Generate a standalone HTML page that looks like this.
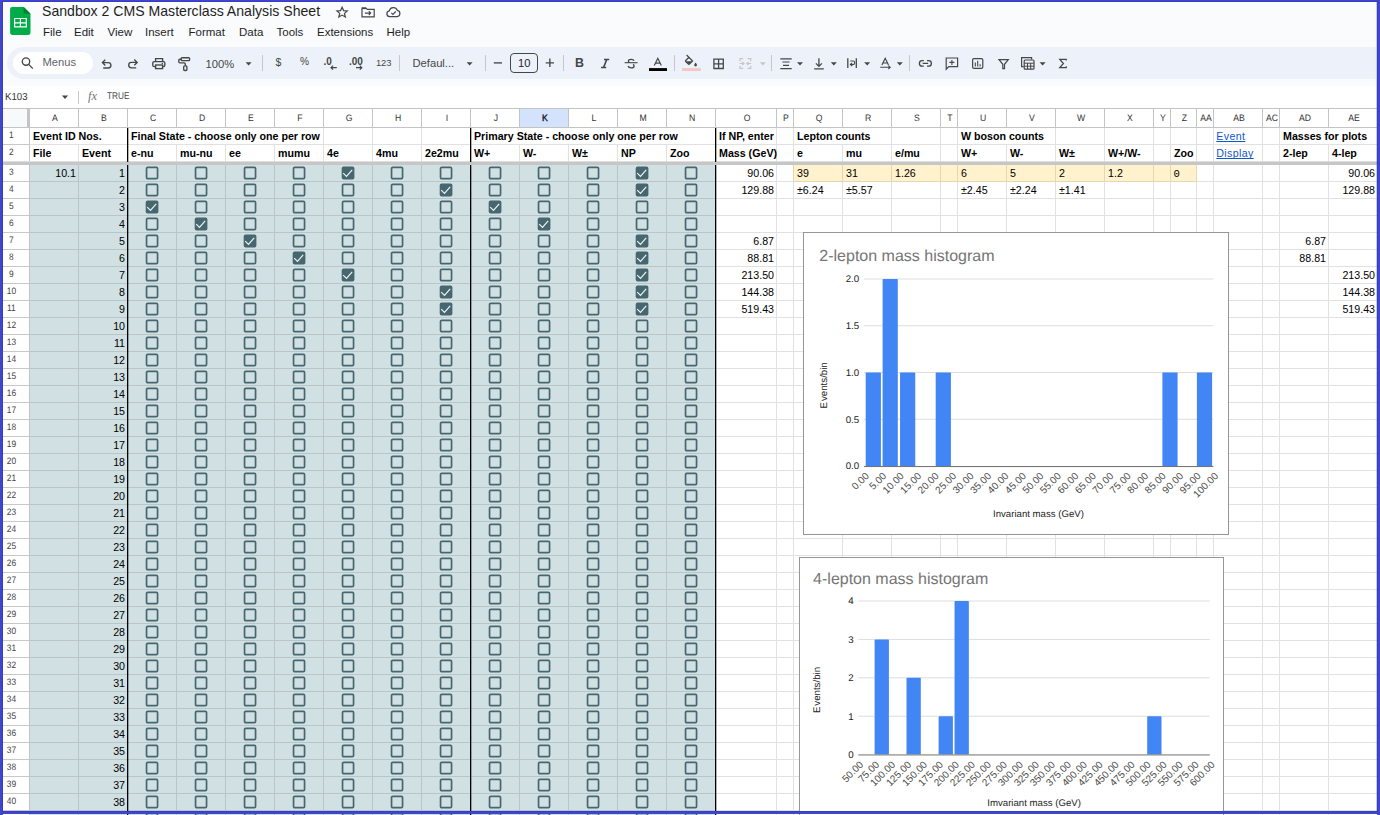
<!DOCTYPE html><html><head><meta charset="utf-8"><title>Sandbox 2 CMS Masterclass Analysis Sheet</title>
<style>

html,body{margin:0;padding:0;width:1380px;height:815px;overflow:hidden}
body{width:1380px;height:815px;overflow:hidden;position:relative;background:#fff;font-family:"Liberation Sans", sans-serif;color:#000}
div,span,svg{position:absolute;box-sizing:border-box}
.t{white-space:pre;font-size:10.67px;line-height:16px;height:16px}
.b{font-weight:bold}
.r{text-align:right}
.hl{height:1px;background:rgba(0,0,0,.12)}
.vl{width:1px;background:rgba(0,0,0,.12)}
.ch{font-size:9.3px;line-height:18px;height:18px;text-align:center;color:#333;top:108.8px;margin-left:.6px;transform:scaleX(.93);text-rendering:geometricPrecision}
.rh{font-size:9.3px;line-height:16px;height:16px;text-align:center;color:#444;left:0px;width:22.8px;transform:scaleX(.9);margin-top:-1.2px;text-rendering:geometricPrecision}
.cb{width:12px;height:12px;border:1.6px solid #46676f;border-radius:2px}
.cbx{width:12px;height:12px;border-radius:2px;background:#46676f}
.mn{font-size:11.5px;top:25px;line-height:14px;color:#1f1f1f;white-space:pre}
.sep{width:1px;height:16px;top:55px;background:#c7c7c7}
.tb{white-space:pre;line-height:14px;color:#444746}
a{color:#1155cc;text-decoration-skip-ink:none}

</style></head><body><div id="w" style="left:0;top:0;width:1380px;height:815px;overflow:hidden">
<div style="left:0;top:0;width:1380px;height:86px;background:#f9fbfd"></div>
<div style="left:3px;top:2px;width:1374px;height:1px;background:#fff"></div><div style="left:3px;top:2px;width:1px;height:84px;background:#fff"></div>
<svg style="left:8px;top:5px" width="26" height="32" viewBox="8 5 26 32">
<path d="M12.2 6.9H23.7L30.5 13.8V32.8A2.1 2.1 0 0 1 28.4 34.9H12.2A2.1 2.1 0 0 1 10.1 32.8V9A2.1 2.1 0 0 1 12.2 6.9z" fill="#00ac47"/>
<path d="M23.7 6.9V12.6Q23.7 13.8 24.9 13.8H30.5z" fill="#00832d"/>
<path d="M14 17.9H26.9V27.5H14zM15.2 19.1V22.2H19.8V19.1zM21 19.1V22.2H25.7V19.1zM15.2 23.4V26.3H19.8V23.4zM21 23.4V26.3H25.7V23.4z" fill="#fff" fill-rule="evenodd"/>
</svg>

<div class="mn" style="left:42px;top:2px;font-size:14.1px;line-height:18px;color:#1f1f1f">Sandbox 2 CMS Masterclass Analysis Sheet</div>
<svg style="left:330px;top:2px" width="80" height="22" viewBox="330 2 80 22" fill="none" stroke="#444746" stroke-width="1.2" stroke-linejoin="miter">
<!-- star -->
<path d="M342.1 7.2L343.6 10.6L347.3 10.95L344.5 13.4L345.35 17L342.1 15.1L338.85 17L339.7 13.4L336.9 10.95L340.6 10.6z"/>
<!-- folder move -->
<path d="M367.3 9.4L365.9 8H362V16.9H374.2V9.4z"/><path d="M362 8.3H366" stroke-width="1.6"/><path d="M364.9 13.1H370.6M368.8 11.2L370.7 13.1L368.8 15" stroke-width="1.1"/>
<!-- cloud done -->
<path d="M389.6 16.6A2.9 2.9 0 0 1 389.3 10.85A4.2 4.2 0 0 1 397.3 10.3A3.2 3.2 0 0 1 397.2 16.6z"/><path d="M391.3 12.9L392.9 14.5L395.8 11.5" stroke-width="1.1"/>
</svg>

<div class="mn" style="left:43px">File</div>
<div class="mn" style="left:74px">Edit</div>
<div class="mn" style="left:107.5px">View</div>
<div class="mn" style="left:145px">Insert</div>
<div class="mn" style="left:188.5px">Format</div>
<div class="mn" style="left:239px">Data</div>
<div class="mn" style="left:276.5px">Tools</div>
<div class="mn" style="left:317px">Extensions</div>
<div class="mn" style="left:386.5px">Help</div>
<div style="left:7px;top:47px;width:1400px;height:32px;border-radius:16px;background:#edf2fa"></div>
<div style="left:13px;top:52px;width:80px;height:22px;border-radius:11px;background:#fff"></div>
<svg style="left:0;top:44px" width="1380" height="40" viewBox="0 44 1380 40" fill="none" stroke="#444746" stroke-width="1.35" stroke-linecap="butt" stroke-linejoin="miter">
<!-- search -->
<circle cx="26" cy="61.6" r="3.7"/><path d="M28.7 64.4L32.8 68.6"/>
<!-- undo -->
<path d="M105.3 59.7L102.4 62.6L105.3 65.5M102.6 62.6H108.2A2.7 2.7 0 0 1 108.2 68H103.2"/>
<!-- redo -->
<path d="M134.3 59.5L137.2 62.4L134.3 65.3M137 62.4H131.4A2.7 2.7 0 0 0 131.4 67.8H136.2"/>
<!-- print -->
<path d="M155.6 61.6V58.6H162.6V61.6"/><rect x="152.8" y="61.6" width="12" height="5" rx="1.3"/><rect x="155.6" y="65" width="7" height="3.6" fill="#edf2fa"/><circle cx="162.3" cy="63.4" r=".7" fill="#444746" stroke="none"/>
<!-- paint roller -->
<rect x="181.2" y="57.7" width="8.4" height="2.9" rx=".9"/><path d="M181.2 59.2H179.9Q178.8 59.2 178.8 60.3V61.7Q178.8 62.8 179.9 62.8H184.2Q185.3 62.8 185.3 63.9V65.8"/><rect x="183.7" y="65.8" width="3.2" height="4.7" rx="1"/>
<!-- dropdown arrows -->
<g fill="#444746" stroke="none">
<path d="M245.6 62.2h6l-3 3.3z"/><path d="M466.6 62.2h6l-3 3.3z"/>
<path d="M797 62.2h6l-3 3.3z"/><path d="M830.8 62.2h6l-3 3.3z"/><path d="M864.2 62.2h6l-3 3.3z"/><path d="M896.8 62.2h6l-3 3.3z"/><path d="M1039.6 62.2h6l-3 3.3z"/>
<path d="M759.8 62.2h6l-3 3.3z" fill="#c4c7c5"/>
</g>
<!-- decimal arrows -->
<path d="M336.8 67.7H331M333 65.7L331 67.7L333 69.7" stroke-width="1.2"/>
<path d="M356 67.7H361.8M359.8 65.7L361.8 67.7L359.8 69.7" stroke-width="1.2"/>
<!-- minus, font size box, plus -->
<path d="M493.8 62.9H502"/><rect x="510.5" y="53.5" width="27" height="19" rx="3.5" stroke-width="1"/><path d="M545.7 62.8H554M549.85 58.6V67"/>
<!-- italic -->
<path d="M604 59.6H609.2M601 67.4H606.2M606.7 59.6L603.6 67.4" stroke-width="1.5"/>
<!-- strikethrough -->
<path d="M624.6 62.7H637.6" stroke-width="1.1"/>
<path d="M634 60.9Q633.6 59.3 631.1 59.3Q628.4 59.3 628.4 61.1Q628.4 62 629.3 62.4M628.1 66Q628.6 67.9 631.2 67.9Q634.1 67.9 634.1 65.9Q634.1 64.8 633 64.3" stroke-width="1.3"/>
<!-- text colour -->
<rect x="649" y="68.1" width="18" height="2.9" fill="#000" stroke="none"/>
<path d="M654.3 65.4L657.8 58.3L661.3 65.4M655.5 63.2H660.1" stroke-width="1.2"/>
<!-- fill colour -->
<rect x="682" y="68.1" width="18.8" height="2.9" fill="#f4c7c3" stroke="none"/>
<path d="M686.6 55L692.6 61L689.4 64.2Q688.9 64.7 688.4 64.2L685.7 61.5Q685.2 61 685.7 60.5L689.3 57" stroke-width="1.2"/><path d="M686 61.3H692.2L689 64.4z" fill="#444746" stroke="none"/><path d="M695.6 62.6Q697 64.4 697 65.1A1.4 1.4 0 0 1 694.2 65.1Q694.2 64.4 695.6 62.6z" fill="#444746" stroke="none"/>
<!-- borders -->
<path d="M713.9 59.1H723.3V68.5H713.9zM718.6 59.1V68.5M713.9 63.8H723.3" stroke-width="1.3"/>
<!-- merge (disabled) -->
<g stroke="#c4c7c5" stroke-width="1.2"><path d="M740 61.2V58.7H743.2M747.6 58.7H750.8V61.2M740 65.8V68.3H743.2M747.6 68.3H750.8V65.8M739.6 63.5H744M742.3 61.8L744 63.5L742.3 65.2M751.2 63.5H746.8M748.5 61.8L746.8 63.5L748.5 65.2"/></g>
<!-- align center -->
<path d="M780.3 58.8H791.7M782.4 62H789.6M783 65.3H789M780.3 68.6H791.7" stroke-width="1.2"/>
<!-- valign bottom -->
<path d="M818.9 58.3V66.2M815.9 63.4L818.9 66.4L821.9 63.4M814.2 68.9H823.8" stroke-width="1.3"/>
<!-- wrap -->
<path d="M847.8 58.3V68.1M856.3 58.3V68.1" stroke-width="1.3"/><path d="M850.3 61H852.9A1.7 1.7 0 0 1 852.9 64.6H850.6M852 63L850.4 64.6L852 66.2" stroke-width="1.1"/>
<!-- rotate -->
<path d="M881.9 65L885.2 58.3L888.5 65M883 63H887.4" stroke-width="1.2"/><path d="M880.2 67.3H890.2M888.4 65.6L890.2 67.3L888.4 69" stroke-width="1.1"/>
<!-- link -->
<path d="M923.8 60.6H922.2A2.8 2.8 0 0 0 922.2 66.2H923.8M927 60.6H928.6A2.8 2.8 0 0 1 928.6 66.2H927M922.6 63.4H928.2" stroke-width="1.3"/>
<!-- comment -->
<path d="M946.2 69.2V58H957.6V66.6H948.8z" stroke-width="1.2"/><path d="M949.4 62.4H954.4M951.9 59.9V64.9" stroke-width="1.1"/>
<!-- chart -->
<rect x="972.6" y="58.6" width="10.2" height="9.8" rx="1.4" stroke-width="1.2"/><path d="M975.3 62.6V66.4M977.7 60.8V66.4M980.1 64.3V66.4" stroke-width="1.1"/>
<!-- filter -->
<path d="M999 59.7H1008.3L1004.5 64.3V68.6H1002.8V64.3z" stroke-width="1.2"/>
<!-- table views -->
<path d="M1023.6 66.6H1021.6V57.6H1031.6V59.4" stroke-width="1.2"/><rect x="1024.2" y="60" width="9.8" height="9.2" rx="1" stroke-width="1.2"/><path d="M1024.2 63.2H1034M1027.5 63.2V69.2M1030.7 63.2V69.2M1024.2 66.2H1034" stroke-width="1"/>
<!-- sigma -->
<path d="M1066.2 60.6V59.3H1059.8L1063.4 63.5L1059.8 67.6H1066.2V66.3" stroke-width="1.3"/>
</svg>
<div class="sep" style="left:262px"></div><div class="sep" style="left:399px"></div><div class="sep" style="left:485px"></div><div class="sep" style="left:563px"></div><div class="sep" style="left:674px"></div><div class="sep" style="left:771px"></div><div class="sep" style="left:909px"></div>
<div class="tb" style="left:42.5px;top:55.3px;font-size:11.2px;color:#5f6368">Menus</div>
<div class="tb" style="left:205.5px;top:56.8px;font-size:11.2px">100%</div>
<div class="tb" style="left:275.5px;top:55.3px;font-size:10.5px">$</div>
<div class="tb" style="left:300px;top:55.3px;font-size:10.2px">%</div>
<div class="tb" style="left:323.5px;top:54.6px;font-size:10px;font-weight:bold">.0</div>
<div class="tb" style="left:349px;top:54.6px;font-size:10px;font-weight:bold">.00</div>
<div class="tb" style="left:376px;top:55.8px;font-size:9.4px;letter-spacing:-.1px">123</div>
<div class="tb" style="left:412.5px;top:56.4px;font-size:11.2px">Defaul...</div>
<div class="tb" style="left:518px;top:56.4px;font-size:11.2px;color:#1f1f1f">10</div>
<div class="tb" style="left:575px;top:56px;font-size:12.4px;font-weight:bold">B</div>

<div style="left:0;top:86px;width:1380px;height:22px;background:#fff"></div>
<div style="left:4.6px;top:91.6px;font-size:10.2px;line-height:12px;color:#333;white-space:pre;text-rendering:geometricPrecision;transform-origin:0 0;transform:scaleX(.95)">K103</div>
<svg style="left:61px;top:94.6px" width="8" height="5" viewBox="0 0 8 5"><path d="M0.9 0.6h6.2L4 4.1z" fill="#444"/></svg>
<div style="left:78px;top:91px;width:1px;height:13px;background:#c7c7c7"></div>
<div style="left:88px;top:88px;font-family:'Liberation Serif',serif;font-style:italic;font-size:12.5px;line-height:16px;color:#777;white-space:pre;letter-spacing:0px">fx</div>
<div style="left:107px;top:90.6px;font-size:9.7px;line-height:12px;color:#4a4a4a;white-space:pre;text-rendering:geometricPrecision;transform-origin:0 0;transform:scaleX(.85)">TRUE</div>
<div style="left:3px;top:109px;width:24px;height:18px;background:#f8f9fa"></div>
<div style="left:520px;top:109px;width:48px;height:18px;background:#d3e3fd"></div>
<div style="left:30px;top:165px;width:685px;height:660px;background:#d0e0e3"></div>
<div style="left:794px;top:165px;width:402px;height:16px;background:#fff2cc"></div>
<div style="left:0;top:108px;width:1380px;height:1px;background:#c4c4c4"></div>
<div style="left:0;top:127px;width:1380px;height:1px;background:#c4c4c4"></div>
<div style="left:27px;top:109px;width:3px;height:18px;background:#c4c4c4"></div>
<div style="left:78px;top:109px;width:1px;height:18px;background:#c4c4c4"></div>
<div class="ch" style="left:30px;width:48px">A</div>
<div style="left:127px;top:109px;width:1px;height:18px;background:#c4c4c4"></div>
<div class="ch" style="left:79px;width:48px">B</div>
<div style="left:176px;top:109px;width:1px;height:18px;background:#c4c4c4"></div>
<div class="ch" style="left:128px;width:48px">C</div>
<div style="left:225px;top:109px;width:1px;height:18px;background:#c4c4c4"></div>
<div class="ch" style="left:177px;width:48px">D</div>
<div style="left:274px;top:109px;width:1px;height:18px;background:#c4c4c4"></div>
<div class="ch" style="left:226px;width:48px">E</div>
<div style="left:323px;top:109px;width:1px;height:18px;background:#c4c4c4"></div>
<div class="ch" style="left:275px;width:48px">F</div>
<div style="left:372px;top:109px;width:1px;height:18px;background:#c4c4c4"></div>
<div class="ch" style="left:324px;width:48px">G</div>
<div style="left:421px;top:109px;width:1px;height:18px;background:#c4c4c4"></div>
<div class="ch" style="left:373px;width:48px">H</div>
<div style="left:470px;top:109px;width:1px;height:18px;background:#c4c4c4"></div>
<div class="ch" style="left:422px;width:48px">I</div>
<div style="left:519px;top:109px;width:1px;height:18px;background:#c4c4c4"></div>
<div class="ch" style="left:471px;width:48px">J</div>
<div style="left:568px;top:109px;width:1px;height:18px;background:#c4c4c4"></div>
<div class="ch" style="left:520px;width:48px;color:#111;-webkit-text-stroke:.35px #111">K</div>
<div style="left:617px;top:109px;width:1px;height:18px;background:#c4c4c4"></div>
<div class="ch" style="left:569px;width:48px">L</div>
<div style="left:666px;top:109px;width:1px;height:18px;background:#c4c4c4"></div>
<div class="ch" style="left:618px;width:48px">M</div>
<div style="left:715px;top:109px;width:1px;height:18px;background:#c4c4c4"></div>
<div class="ch" style="left:667px;width:48px">N</div>
<div style="left:776px;top:109px;width:1px;height:18px;background:#c4c4c4"></div>
<div class="ch" style="left:716px;width:60px">O</div>
<div style="left:793px;top:109px;width:1px;height:18px;background:#c4c4c4"></div>
<div class="ch" style="left:777px;width:16px">P</div>
<div style="left:842px;top:109px;width:1px;height:18px;background:#c4c4c4"></div>
<div class="ch" style="left:794px;width:48px">Q</div>
<div style="left:891px;top:109px;width:1px;height:18px;background:#c4c4c4"></div>
<div class="ch" style="left:843px;width:48px">R</div>
<div style="left:940px;top:109px;width:1px;height:18px;background:#c4c4c4"></div>
<div class="ch" style="left:892px;width:48px">S</div>
<div style="left:957px;top:109px;width:1px;height:18px;background:#c4c4c4"></div>
<div class="ch" style="left:941px;width:16px">T</div>
<div style="left:1006px;top:109px;width:1px;height:18px;background:#c4c4c4"></div>
<div class="ch" style="left:958px;width:48px">U</div>
<div style="left:1055px;top:109px;width:1px;height:18px;background:#c4c4c4"></div>
<div class="ch" style="left:1007px;width:48px">V</div>
<div style="left:1104px;top:109px;width:1px;height:18px;background:#c4c4c4"></div>
<div class="ch" style="left:1056px;width:48px">W</div>
<div style="left:1153px;top:109px;width:1px;height:18px;background:#c4c4c4"></div>
<div class="ch" style="left:1105px;width:48px">X</div>
<div style="left:1170px;top:109px;width:1px;height:18px;background:#c4c4c4"></div>
<div class="ch" style="left:1154px;width:16px">Y</div>
<div style="left:1196px;top:109px;width:1px;height:18px;background:#c4c4c4"></div>
<div class="ch" style="left:1171px;width:25px">Z</div>
<div style="left:1213px;top:109px;width:1px;height:18px;background:#c4c4c4"></div>
<div class="ch" style="left:1197px;width:16px">AA</div>
<div style="left:1262px;top:109px;width:1px;height:18px;background:#c4c4c4"></div>
<div class="ch" style="left:1214px;width:48px">AB</div>
<div style="left:1279px;top:109px;width:1px;height:18px;background:#c4c4c4"></div>
<div class="ch" style="left:1263px;width:16px">AC</div>
<div style="left:1328px;top:109px;width:1px;height:18px;background:#c4c4c4"></div>
<div class="ch" style="left:1280px;width:48px">AD</div>
<div style="left:1377px;top:109px;width:1px;height:18px;background:#c4c4c4"></div>
<div class="ch" style="left:1329px;width:48px">AE</div>
<div style="left:29px;top:128px;width:1px;height:34px;background:#c4c4c4"></div>
<div style="left:29px;top:165px;width:1px;height:660px;background:#c4c4c4"></div>
<div class="rh" style="top:128px">1</div>
<div style="left:0;top:144px;width:1380px;height:1px;background:#e1e1e1"></div>
<div style="left:0;top:144px;width:30px;height:1px;background:#c8c8c8"></div>
<div class="rh" style="top:145px">2</div>
<div class="rh" style="top:165px">3</div>
<div style="left:0;top:181px;width:30px;height:1px;background:#c8c8c8"></div>
<div style="left:30px;top:181px;width:686px;height:1px;background:#b8c6c8"></div>
<div style="left:716px;top:181px;width:664px;height:1px;background:#e1e1e1"></div>
<div class="rh" style="top:182px">4</div>
<div style="left:0;top:198px;width:30px;height:1px;background:#c8c8c8"></div>
<div style="left:30px;top:198px;width:686px;height:1px;background:#b8c6c8"></div>
<div style="left:716px;top:198px;width:664px;height:1px;background:#e1e1e1"></div>
<div class="rh" style="top:199px">5</div>
<div style="left:0;top:215px;width:30px;height:1px;background:#c8c8c8"></div>
<div style="left:30px;top:215px;width:686px;height:1px;background:#b8c6c8"></div>
<div style="left:716px;top:215px;width:664px;height:1px;background:#e1e1e1"></div>
<div class="rh" style="top:216px">6</div>
<div style="left:0;top:232px;width:30px;height:1px;background:#c8c8c8"></div>
<div style="left:30px;top:232px;width:686px;height:1px;background:#b8c6c8"></div>
<div style="left:716px;top:232px;width:664px;height:1px;background:#e1e1e1"></div>
<div class="rh" style="top:233px">7</div>
<div style="left:0;top:249px;width:30px;height:1px;background:#c8c8c8"></div>
<div style="left:30px;top:249px;width:686px;height:1px;background:#b8c6c8"></div>
<div style="left:716px;top:249px;width:664px;height:1px;background:#e1e1e1"></div>
<div class="rh" style="top:250px">8</div>
<div style="left:0;top:266px;width:30px;height:1px;background:#c8c8c8"></div>
<div style="left:30px;top:266px;width:686px;height:1px;background:#b8c6c8"></div>
<div style="left:716px;top:266px;width:664px;height:1px;background:#e1e1e1"></div>
<div class="rh" style="top:267px">9</div>
<div style="left:0;top:283px;width:30px;height:1px;background:#c8c8c8"></div>
<div style="left:30px;top:283px;width:686px;height:1px;background:#b8c6c8"></div>
<div style="left:716px;top:283px;width:664px;height:1px;background:#e1e1e1"></div>
<div class="rh" style="top:284px">10</div>
<div style="left:0;top:300px;width:30px;height:1px;background:#c8c8c8"></div>
<div style="left:30px;top:300px;width:686px;height:1px;background:#b8c6c8"></div>
<div style="left:716px;top:300px;width:664px;height:1px;background:#e1e1e1"></div>
<div class="rh" style="top:301px">11</div>
<div style="left:0;top:317px;width:30px;height:1px;background:#c8c8c8"></div>
<div style="left:30px;top:317px;width:686px;height:1px;background:#b8c6c8"></div>
<div style="left:716px;top:317px;width:664px;height:1px;background:#e1e1e1"></div>
<div class="rh" style="top:318px">12</div>
<div style="left:0;top:334px;width:30px;height:1px;background:#c8c8c8"></div>
<div style="left:30px;top:334px;width:686px;height:1px;background:#b8c6c8"></div>
<div style="left:716px;top:334px;width:664px;height:1px;background:#e1e1e1"></div>
<div class="rh" style="top:335px">13</div>
<div style="left:0;top:351px;width:30px;height:1px;background:#c8c8c8"></div>
<div style="left:30px;top:351px;width:686px;height:1px;background:#b8c6c8"></div>
<div style="left:716px;top:351px;width:664px;height:1px;background:#e1e1e1"></div>
<div class="rh" style="top:352px">14</div>
<div style="left:0;top:368px;width:30px;height:1px;background:#c8c8c8"></div>
<div style="left:30px;top:368px;width:686px;height:1px;background:#b8c6c8"></div>
<div style="left:716px;top:368px;width:664px;height:1px;background:#e1e1e1"></div>
<div class="rh" style="top:369px">15</div>
<div style="left:0;top:385px;width:30px;height:1px;background:#c8c8c8"></div>
<div style="left:30px;top:385px;width:686px;height:1px;background:#b8c6c8"></div>
<div style="left:716px;top:385px;width:664px;height:1px;background:#e1e1e1"></div>
<div class="rh" style="top:386px">16</div>
<div style="left:0;top:402px;width:30px;height:1px;background:#c8c8c8"></div>
<div style="left:30px;top:402px;width:686px;height:1px;background:#b8c6c8"></div>
<div style="left:716px;top:402px;width:664px;height:1px;background:#e1e1e1"></div>
<div class="rh" style="top:403px">17</div>
<div style="left:0;top:419px;width:30px;height:1px;background:#c8c8c8"></div>
<div style="left:30px;top:419px;width:686px;height:1px;background:#b8c6c8"></div>
<div style="left:716px;top:419px;width:664px;height:1px;background:#e1e1e1"></div>
<div class="rh" style="top:420px">18</div>
<div style="left:0;top:436px;width:30px;height:1px;background:#c8c8c8"></div>
<div style="left:30px;top:436px;width:686px;height:1px;background:#b8c6c8"></div>
<div style="left:716px;top:436px;width:664px;height:1px;background:#e1e1e1"></div>
<div class="rh" style="top:437px">19</div>
<div style="left:0;top:453px;width:30px;height:1px;background:#c8c8c8"></div>
<div style="left:30px;top:453px;width:686px;height:1px;background:#b8c6c8"></div>
<div style="left:716px;top:453px;width:664px;height:1px;background:#e1e1e1"></div>
<div class="rh" style="top:454px">20</div>
<div style="left:0;top:470px;width:30px;height:1px;background:#c8c8c8"></div>
<div style="left:30px;top:470px;width:686px;height:1px;background:#b8c6c8"></div>
<div style="left:716px;top:470px;width:664px;height:1px;background:#e1e1e1"></div>
<div class="rh" style="top:471px">21</div>
<div style="left:0;top:487px;width:30px;height:1px;background:#c8c8c8"></div>
<div style="left:30px;top:487px;width:686px;height:1px;background:#b8c6c8"></div>
<div style="left:716px;top:487px;width:664px;height:1px;background:#e1e1e1"></div>
<div class="rh" style="top:488px">22</div>
<div style="left:0;top:504px;width:30px;height:1px;background:#c8c8c8"></div>
<div style="left:30px;top:504px;width:686px;height:1px;background:#b8c6c8"></div>
<div style="left:716px;top:504px;width:664px;height:1px;background:#e1e1e1"></div>
<div class="rh" style="top:505px">23</div>
<div style="left:0;top:521px;width:30px;height:1px;background:#c8c8c8"></div>
<div style="left:30px;top:521px;width:686px;height:1px;background:#b8c6c8"></div>
<div style="left:716px;top:521px;width:664px;height:1px;background:#e1e1e1"></div>
<div class="rh" style="top:522px">24</div>
<div style="left:0;top:538px;width:30px;height:1px;background:#c8c8c8"></div>
<div style="left:30px;top:538px;width:686px;height:1px;background:#b8c6c8"></div>
<div style="left:716px;top:538px;width:664px;height:1px;background:#e1e1e1"></div>
<div class="rh" style="top:539px">25</div>
<div style="left:0;top:555px;width:30px;height:1px;background:#c8c8c8"></div>
<div style="left:30px;top:555px;width:686px;height:1px;background:#b8c6c8"></div>
<div style="left:716px;top:555px;width:664px;height:1px;background:#e1e1e1"></div>
<div class="rh" style="top:556px">26</div>
<div style="left:0;top:572px;width:30px;height:1px;background:#c8c8c8"></div>
<div style="left:30px;top:572px;width:686px;height:1px;background:#b8c6c8"></div>
<div style="left:716px;top:572px;width:664px;height:1px;background:#e1e1e1"></div>
<div class="rh" style="top:573px">27</div>
<div style="left:0;top:589px;width:30px;height:1px;background:#c8c8c8"></div>
<div style="left:30px;top:589px;width:686px;height:1px;background:#b8c6c8"></div>
<div style="left:716px;top:589px;width:664px;height:1px;background:#e1e1e1"></div>
<div class="rh" style="top:590px">28</div>
<div style="left:0;top:606px;width:30px;height:1px;background:#c8c8c8"></div>
<div style="left:30px;top:606px;width:686px;height:1px;background:#b8c6c8"></div>
<div style="left:716px;top:606px;width:664px;height:1px;background:#e1e1e1"></div>
<div class="rh" style="top:607px">29</div>
<div style="left:0;top:623px;width:30px;height:1px;background:#c8c8c8"></div>
<div style="left:30px;top:623px;width:686px;height:1px;background:#b8c6c8"></div>
<div style="left:716px;top:623px;width:664px;height:1px;background:#e1e1e1"></div>
<div class="rh" style="top:624px">30</div>
<div style="left:0;top:640px;width:30px;height:1px;background:#c8c8c8"></div>
<div style="left:30px;top:640px;width:686px;height:1px;background:#b8c6c8"></div>
<div style="left:716px;top:640px;width:664px;height:1px;background:#e1e1e1"></div>
<div class="rh" style="top:641px">31</div>
<div style="left:0;top:657px;width:30px;height:1px;background:#c8c8c8"></div>
<div style="left:30px;top:657px;width:686px;height:1px;background:#b8c6c8"></div>
<div style="left:716px;top:657px;width:664px;height:1px;background:#e1e1e1"></div>
<div class="rh" style="top:658px">32</div>
<div style="left:0;top:674px;width:30px;height:1px;background:#c8c8c8"></div>
<div style="left:30px;top:674px;width:686px;height:1px;background:#b8c6c8"></div>
<div style="left:716px;top:674px;width:664px;height:1px;background:#e1e1e1"></div>
<div class="rh" style="top:675px">33</div>
<div style="left:0;top:691px;width:30px;height:1px;background:#c8c8c8"></div>
<div style="left:30px;top:691px;width:686px;height:1px;background:#b8c6c8"></div>
<div style="left:716px;top:691px;width:664px;height:1px;background:#e1e1e1"></div>
<div class="rh" style="top:692px">34</div>
<div style="left:0;top:708px;width:30px;height:1px;background:#c8c8c8"></div>
<div style="left:30px;top:708px;width:686px;height:1px;background:#b8c6c8"></div>
<div style="left:716px;top:708px;width:664px;height:1px;background:#e1e1e1"></div>
<div class="rh" style="top:709px">35</div>
<div style="left:0;top:725px;width:30px;height:1px;background:#c8c8c8"></div>
<div style="left:30px;top:725px;width:686px;height:1px;background:#b8c6c8"></div>
<div style="left:716px;top:725px;width:664px;height:1px;background:#e1e1e1"></div>
<div class="rh" style="top:726px">36</div>
<div style="left:0;top:742px;width:30px;height:1px;background:#c8c8c8"></div>
<div style="left:30px;top:742px;width:686px;height:1px;background:#b8c6c8"></div>
<div style="left:716px;top:742px;width:664px;height:1px;background:#e1e1e1"></div>
<div class="rh" style="top:743px">37</div>
<div style="left:0;top:759px;width:30px;height:1px;background:#c8c8c8"></div>
<div style="left:30px;top:759px;width:686px;height:1px;background:#b8c6c8"></div>
<div style="left:716px;top:759px;width:664px;height:1px;background:#e1e1e1"></div>
<div class="rh" style="top:760px">38</div>
<div style="left:0;top:776px;width:30px;height:1px;background:#c8c8c8"></div>
<div style="left:30px;top:776px;width:686px;height:1px;background:#b8c6c8"></div>
<div style="left:716px;top:776px;width:664px;height:1px;background:#e1e1e1"></div>
<div class="rh" style="top:777px">39</div>
<div style="left:0;top:793px;width:30px;height:1px;background:#c8c8c8"></div>
<div style="left:30px;top:793px;width:686px;height:1px;background:#b8c6c8"></div>
<div style="left:716px;top:793px;width:664px;height:1px;background:#e1e1e1"></div>
<div class="rh" style="top:794px">40</div>
<div style="left:0;top:810px;width:30px;height:1px;background:#c8c8c8"></div>
<div style="left:30px;top:810px;width:686px;height:1px;background:#b8c6c8"></div>
<div style="left:716px;top:810px;width:664px;height:1px;background:#e1e1e1"></div>
<div style="left:0;top:827px;width:30px;height:1px;background:#c8c8c8"></div>
<div style="left:30px;top:827px;width:686px;height:1px;background:#b8c6c8"></div>
<div style="left:716px;top:827px;width:664px;height:1px;background:#e1e1e1"></div>
<div style="left:793px;top:181px;width:404px;height:1px;background:#e3d8b6"></div>
<div style="left:0;top:161px;width:1380px;height:1px;background:#dedede"></div>
<div style="left:0;top:162px;width:1380px;height:3px;background:#c6c6c6"></div>
<div style="left:78px;top:145px;width:1px;height:16px;background:#e1e1e1"></div>
<div style="left:78px;top:165px;width:1px;height:660px;background:#b8c6c8"></div>
<div style="left:127px;top:128px;width:1px;height:34px;background:#000"></div>
<div style="left:127px;top:165px;width:1px;height:660px;background:#000"></div>
<div style="left:128px;top:128px;width:1px;height:34px;background:rgba(0,0,0,.3)"></div>
<div style="left:128px;top:165px;width:1px;height:660px;background:rgba(0,0,0,.3)"></div>
<div style="left:176px;top:145px;width:1px;height:16px;background:#e1e1e1"></div>
<div style="left:176px;top:165px;width:1px;height:660px;background:#b8c6c8"></div>
<div style="left:225px;top:145px;width:1px;height:16px;background:#e1e1e1"></div>
<div style="left:225px;top:165px;width:1px;height:660px;background:#b8c6c8"></div>
<div style="left:274px;top:145px;width:1px;height:16px;background:#e1e1e1"></div>
<div style="left:274px;top:165px;width:1px;height:660px;background:#b8c6c8"></div>
<div style="left:323px;top:128px;width:1px;height:33px;background:#e1e1e1"></div>
<div style="left:323px;top:165px;width:1px;height:660px;background:#b8c6c8"></div>
<div style="left:372px;top:128px;width:1px;height:33px;background:#e1e1e1"></div>
<div style="left:372px;top:165px;width:1px;height:660px;background:#b8c6c8"></div>
<div style="left:421px;top:128px;width:1px;height:33px;background:#e1e1e1"></div>
<div style="left:421px;top:165px;width:1px;height:660px;background:#b8c6c8"></div>
<div style="left:470px;top:128px;width:1px;height:34px;background:#000"></div>
<div style="left:470px;top:165px;width:1px;height:660px;background:#000"></div>
<div style="left:471px;top:128px;width:1px;height:34px;background:rgba(0,0,0,.3)"></div>
<div style="left:471px;top:165px;width:1px;height:660px;background:rgba(0,0,0,.3)"></div>
<div style="left:519px;top:145px;width:1px;height:16px;background:#e1e1e1"></div>
<div style="left:519px;top:165px;width:1px;height:660px;background:#b8c6c8"></div>
<div style="left:568px;top:145px;width:1px;height:16px;background:#e1e1e1"></div>
<div style="left:568px;top:165px;width:1px;height:660px;background:#b8c6c8"></div>
<div style="left:617px;top:145px;width:1px;height:16px;background:#e1e1e1"></div>
<div style="left:617px;top:165px;width:1px;height:660px;background:#b8c6c8"></div>
<div style="left:666px;top:145px;width:1px;height:16px;background:#e1e1e1"></div>
<div style="left:666px;top:165px;width:1px;height:660px;background:#b8c6c8"></div>
<div style="left:715px;top:128px;width:1px;height:34px;background:#000"></div>
<div style="left:715px;top:165px;width:1px;height:660px;background:#000"></div>
<div style="left:716px;top:128px;width:1px;height:34px;background:rgba(0,0,0,.3)"></div>
<div style="left:716px;top:165px;width:1px;height:660px;background:rgba(0,0,0,.3)"></div>
<div style="left:776px;top:128px;width:1px;height:33px;background:#e1e1e1"></div>
<div style="left:776px;top:165px;width:1px;height:660px;background:#e1e1e1"></div>
<div style="left:793px;top:128px;width:1px;height:33px;background:#e1e1e1"></div>
<div style="left:793px;top:165px;width:1px;height:660px;background:#e1e1e1"></div>
<div style="left:793px;top:165px;width:1px;height:17px;background:#e3d8b6"></div>
<div style="left:842px;top:145px;width:1px;height:16px;background:#e1e1e1"></div>
<div style="left:842px;top:165px;width:1px;height:660px;background:#e1e1e1"></div>
<div style="left:842px;top:165px;width:1px;height:17px;background:#e3d8b6"></div>
<div style="left:891px;top:128px;width:1px;height:33px;background:#e1e1e1"></div>
<div style="left:891px;top:165px;width:1px;height:660px;background:#e1e1e1"></div>
<div style="left:891px;top:165px;width:1px;height:17px;background:#e3d8b6"></div>
<div style="left:940px;top:128px;width:1px;height:33px;background:#e1e1e1"></div>
<div style="left:940px;top:165px;width:1px;height:660px;background:#e1e1e1"></div>
<div style="left:940px;top:165px;width:1px;height:17px;background:#e3d8b6"></div>
<div style="left:957px;top:128px;width:1px;height:33px;background:#e1e1e1"></div>
<div style="left:957px;top:165px;width:1px;height:660px;background:#e1e1e1"></div>
<div style="left:957px;top:165px;width:1px;height:17px;background:#e3d8b6"></div>
<div style="left:1006px;top:145px;width:1px;height:16px;background:#e1e1e1"></div>
<div style="left:1006px;top:165px;width:1px;height:660px;background:#e1e1e1"></div>
<div style="left:1006px;top:165px;width:1px;height:17px;background:#e3d8b6"></div>
<div style="left:1055px;top:128px;width:1px;height:33px;background:#e1e1e1"></div>
<div style="left:1055px;top:165px;width:1px;height:660px;background:#e1e1e1"></div>
<div style="left:1055px;top:165px;width:1px;height:17px;background:#e3d8b6"></div>
<div style="left:1104px;top:128px;width:1px;height:33px;background:#e1e1e1"></div>
<div style="left:1104px;top:165px;width:1px;height:660px;background:#e1e1e1"></div>
<div style="left:1104px;top:165px;width:1px;height:17px;background:#e3d8b6"></div>
<div style="left:1153px;top:128px;width:1px;height:33px;background:#e1e1e1"></div>
<div style="left:1153px;top:165px;width:1px;height:660px;background:#e1e1e1"></div>
<div style="left:1153px;top:165px;width:1px;height:17px;background:#e3d8b6"></div>
<div style="left:1170px;top:128px;width:1px;height:33px;background:#e1e1e1"></div>
<div style="left:1170px;top:165px;width:1px;height:660px;background:#e1e1e1"></div>
<div style="left:1170px;top:165px;width:1px;height:17px;background:#e3d8b6"></div>
<div style="left:1196px;top:128px;width:1px;height:33px;background:#e1e1e1"></div>
<div style="left:1196px;top:165px;width:1px;height:660px;background:#e1e1e1"></div>
<div style="left:1196px;top:165px;width:1px;height:17px;background:#e3d8b6"></div>
<div style="left:1213px;top:128px;width:1px;height:33px;background:#e1e1e1"></div>
<div style="left:1213px;top:165px;width:1px;height:660px;background:#e1e1e1"></div>
<div style="left:1262px;top:128px;width:1px;height:33px;background:#e1e1e1"></div>
<div style="left:1262px;top:165px;width:1px;height:660px;background:#e1e1e1"></div>
<div style="left:1279px;top:128px;width:1px;height:33px;background:#e1e1e1"></div>
<div style="left:1279px;top:165px;width:1px;height:660px;background:#e1e1e1"></div>
<div style="left:1328px;top:145px;width:1px;height:16px;background:#e1e1e1"></div>
<div style="left:1328px;top:165px;width:1px;height:660px;background:#e1e1e1"></div>
<div style="left:1377px;top:128px;width:1px;height:33px;background:#e1e1e1"></div>
<div style="left:1377px;top:165px;width:1px;height:660px;background:#e1e1e1"></div>
<div class="t b" style="left:33px;top:128px;">Event ID Nos.</div>
<div class="t b" style="left:131px;top:128px;">Final State - choose only one per row</div>
<div class="t b" style="left:474px;top:128px;">Primary State - choose only one per row</div>
<div class="t b" style="left:719px;top:128px;">If NP, enter</div>
<div class="t b" style="left:797px;top:128px;">Lepton counts</div>
<div class="t b" style="left:961px;top:128px;">W boson counts</div>
<div class="t b" style="left:1283px;top:128px;">Masses for plots</div>
<div class="t" style="left:1217px;top:128px;letter-spacing:.35px;margin-left:-.7px"><a style="text-decoration:underline">Event</a></div>
<div class="t b" style="left:33px;top:145px;">File</div>
<div class="t b" style="left:82px;top:145px;">Event</div>
<div class="t b" style="left:131px;top:145px;">e-nu</div>
<div class="t b" style="left:180px;top:145px;">mu-nu</div>
<div class="t b" style="left:229px;top:145px;">ee</div>
<div class="t b" style="left:278px;top:145px;">mumu</div>
<div class="t b" style="left:327px;top:145px;">4e</div>
<div class="t b" style="left:376px;top:145px;">4mu</div>
<div class="t b" style="left:425px;top:145px;">2e2mu</div>
<div class="t b" style="left:474px;top:145px;">W+</div>
<div class="t b" style="left:523px;top:145px;">W-</div>
<div class="t b" style="left:572px;top:145px;">W±</div>
<div class="t b" style="left:621px;top:145px;">NP</div>
<div class="t b" style="left:670px;top:145px;">Zoo</div>
<div class="t b" style="left:719px;top:145px;">Mass (GeV)</div>
<div class="t b" style="left:797px;top:145px;">e</div>
<div class="t b" style="left:846px;top:145px;">mu</div>
<div class="t b" style="left:895px;top:145px;">e/mu</div>
<div class="t b" style="left:961px;top:145px;">W+</div>
<div class="t b" style="left:1010px;top:145px;">W-</div>
<div class="t b" style="left:1059px;top:145px;">W±</div>
<div class="t b" style="left:1108px;top:145px;">W+/W-</div>
<div class="t b" style="left:1174px;top:145px;">Zoo</div>
<div class="t b" style="left:1283px;top:145px;">2-lep</div>
<div class="t b" style="left:1332px;top:145px;">4-lep</div>
<div class="t" style="left:1217px;top:145px;letter-spacing:.35px;margin-left:-.7px"><a style="text-decoration:underline">Display</a></div>
<div class="t r" style="left:30px;top:165px;width:46px;">10.1</div>
<div class="t r" style="left:79px;top:165px;width:46px;">1</div>
<div class="t r" style="left:79px;top:182px;width:46px;">2</div>
<div class="t r" style="left:79px;top:199px;width:46px;">3</div>
<div class="t r" style="left:79px;top:216px;width:46px;">4</div>
<div class="t r" style="left:79px;top:233px;width:46px;">5</div>
<div class="t r" style="left:79px;top:250px;width:46px;">6</div>
<div class="t r" style="left:79px;top:267px;width:46px;">7</div>
<div class="t r" style="left:79px;top:284px;width:46px;">8</div>
<div class="t r" style="left:79px;top:301px;width:46px;">9</div>
<div class="t r" style="left:79px;top:318px;width:46px;">10</div>
<div class="t r" style="left:79px;top:335px;width:46px;">11</div>
<div class="t r" style="left:79px;top:352px;width:46px;">12</div>
<div class="t r" style="left:79px;top:369px;width:46px;">13</div>
<div class="t r" style="left:79px;top:386px;width:46px;">14</div>
<div class="t r" style="left:79px;top:403px;width:46px;">15</div>
<div class="t r" style="left:79px;top:420px;width:46px;">16</div>
<div class="t r" style="left:79px;top:437px;width:46px;">17</div>
<div class="t r" style="left:79px;top:454px;width:46px;">18</div>
<div class="t r" style="left:79px;top:471px;width:46px;">19</div>
<div class="t r" style="left:79px;top:488px;width:46px;">20</div>
<div class="t r" style="left:79px;top:505px;width:46px;">21</div>
<div class="t r" style="left:79px;top:522px;width:46px;">22</div>
<div class="t r" style="left:79px;top:539px;width:46px;">23</div>
<div class="t r" style="left:79px;top:556px;width:46px;">24</div>
<div class="t r" style="left:79px;top:573px;width:46px;">25</div>
<div class="t r" style="left:79px;top:590px;width:46px;">26</div>
<div class="t r" style="left:79px;top:607px;width:46px;">27</div>
<div class="t r" style="left:79px;top:624px;width:46px;">28</div>
<div class="t r" style="left:79px;top:641px;width:46px;">29</div>
<div class="t r" style="left:79px;top:658px;width:46px;">30</div>
<div class="t r" style="left:79px;top:675px;width:46px;">31</div>
<div class="t r" style="left:79px;top:692px;width:46px;">32</div>
<div class="t r" style="left:79px;top:709px;width:46px;">33</div>
<div class="t r" style="left:79px;top:726px;width:46px;">34</div>
<div class="t r" style="left:79px;top:743px;width:46px;">35</div>
<div class="t r" style="left:79px;top:760px;width:46px;">36</div>
<div class="t r" style="left:79px;top:777px;width:46px;">37</div>
<div class="t r" style="left:79px;top:794px;width:46px;">38</div>
<div class="t r" style="left:716px;top:165px;width:58px;">90.06</div>
<div class="t r" style="left:716px;top:182px;width:58px;">129.88</div>
<div class="t r" style="left:716px;top:233px;width:58px;">6.87</div>
<div class="t r" style="left:716px;top:250px;width:58px;">88.81</div>
<div class="t r" style="left:716px;top:267px;width:58px;">213.50</div>
<div class="t r" style="left:716px;top:284px;width:58px;">144.38</div>
<div class="t r" style="left:716px;top:301px;width:58px;">519.43</div>
<div class="t r" style="left:1329px;top:165px;width:46px;">90.06</div>
<div class="t r" style="left:1329px;top:182px;width:46px;">129.88</div>
<div class="t r" style="left:1280px;top:233px;width:46px;">6.87</div>
<div class="t r" style="left:1280px;top:250px;width:46px;">88.81</div>
<div class="t r" style="left:1329px;top:267px;width:46px;">213.50</div>
<div class="t r" style="left:1329px;top:284px;width:46px;">144.38</div>
<div class="t r" style="left:1329px;top:301px;width:46px;">519.43</div>
<div class="t" style="left:797px;top:165px;">39</div>
<div class="t" style="left:846px;top:165px;">31</div>
<div class="t" style="left:895px;top:165px;">1.26</div>
<div class="t" style="left:961px;top:165px;">6</div>
<div class="t" style="left:1010px;top:165px;">5</div>
<div class="t" style="left:1059px;top:165px;">2</div>
<div class="t" style="left:1108px;top:165px;">1.2</div>
<div class="t" style="left:797px;top:182px;">±6.24</div>
<div class="t" style="left:846px;top:182px;">±5.57</div>
<div class="t" style="left:961px;top:182px;">±2.45</div>
<div class="t" style="left:1010px;top:182px;">±2.24</div>
<div class="t" style="left:1059px;top:182px;">±1.41</div>
<div class="t" style="left:1174px;top:165px;font-family:'Liberation Mono',monospace;font-size:10.6px;margin-top:.6px;margin-left:-.5px">0</div>
<svg style="left:0;top:160px" width="720" height="660" viewBox="0 160 720 660"><defs><g id="u"><rect x=".85" y=".85" width="11.0" height="11.3" rx="1.2" fill="none" stroke="#46676f" stroke-width="1.7"/></g><g id="c"><rect x="0" y="0" width="12.7" height="13" rx="1.9" fill="#46676f"/><path d="M1.5 6.6L4.8 9.9L10.5 3.3" fill="none" stroke="#eef3f4" stroke-width="1.2"/></g></defs>
<use href="#u" x="145.70" y="166.50"/>
<use href="#u" x="194.70" y="166.50"/>
<use href="#u" x="243.70" y="166.50"/>
<use href="#u" x="292.70" y="166.50"/>
<use href="#c" x="341.70" y="166.50"/>
<use href="#u" x="390.70" y="166.50"/>
<use href="#u" x="439.70" y="166.50"/>
<use href="#u" x="488.70" y="166.50"/>
<use href="#u" x="537.70" y="166.50"/>
<use href="#u" x="586.70" y="166.50"/>
<use href="#c" x="635.70" y="166.50"/>
<use href="#u" x="684.70" y="166.50"/>
<use href="#u" x="145.70" y="183.50"/>
<use href="#u" x="194.70" y="183.50"/>
<use href="#u" x="243.70" y="183.50"/>
<use href="#u" x="292.70" y="183.50"/>
<use href="#u" x="341.70" y="183.50"/>
<use href="#u" x="390.70" y="183.50"/>
<use href="#c" x="439.70" y="183.50"/>
<use href="#u" x="488.70" y="183.50"/>
<use href="#u" x="537.70" y="183.50"/>
<use href="#u" x="586.70" y="183.50"/>
<use href="#c" x="635.70" y="183.50"/>
<use href="#u" x="684.70" y="183.50"/>
<use href="#c" x="145.70" y="200.50"/>
<use href="#u" x="194.70" y="200.50"/>
<use href="#u" x="243.70" y="200.50"/>
<use href="#u" x="292.70" y="200.50"/>
<use href="#u" x="341.70" y="200.50"/>
<use href="#u" x="390.70" y="200.50"/>
<use href="#u" x="439.70" y="200.50"/>
<use href="#c" x="488.70" y="200.50"/>
<use href="#u" x="537.70" y="200.50"/>
<use href="#u" x="586.70" y="200.50"/>
<use href="#u" x="635.70" y="200.50"/>
<use href="#u" x="684.70" y="200.50"/>
<use href="#u" x="145.70" y="217.50"/>
<use href="#c" x="194.70" y="217.50"/>
<use href="#u" x="243.70" y="217.50"/>
<use href="#u" x="292.70" y="217.50"/>
<use href="#u" x="341.70" y="217.50"/>
<use href="#u" x="390.70" y="217.50"/>
<use href="#u" x="439.70" y="217.50"/>
<use href="#u" x="488.70" y="217.50"/>
<use href="#c" x="537.70" y="217.50"/>
<use href="#u" x="586.70" y="217.50"/>
<use href="#u" x="635.70" y="217.50"/>
<use href="#u" x="684.70" y="217.50"/>
<use href="#u" x="145.70" y="234.50"/>
<use href="#u" x="194.70" y="234.50"/>
<use href="#c" x="243.70" y="234.50"/>
<use href="#u" x="292.70" y="234.50"/>
<use href="#u" x="341.70" y="234.50"/>
<use href="#u" x="390.70" y="234.50"/>
<use href="#u" x="439.70" y="234.50"/>
<use href="#u" x="488.70" y="234.50"/>
<use href="#u" x="537.70" y="234.50"/>
<use href="#u" x="586.70" y="234.50"/>
<use href="#c" x="635.70" y="234.50"/>
<use href="#u" x="684.70" y="234.50"/>
<use href="#u" x="145.70" y="251.50"/>
<use href="#u" x="194.70" y="251.50"/>
<use href="#u" x="243.70" y="251.50"/>
<use href="#c" x="292.70" y="251.50"/>
<use href="#u" x="341.70" y="251.50"/>
<use href="#u" x="390.70" y="251.50"/>
<use href="#u" x="439.70" y="251.50"/>
<use href="#u" x="488.70" y="251.50"/>
<use href="#u" x="537.70" y="251.50"/>
<use href="#u" x="586.70" y="251.50"/>
<use href="#c" x="635.70" y="251.50"/>
<use href="#u" x="684.70" y="251.50"/>
<use href="#u" x="145.70" y="268.50"/>
<use href="#u" x="194.70" y="268.50"/>
<use href="#u" x="243.70" y="268.50"/>
<use href="#u" x="292.70" y="268.50"/>
<use href="#c" x="341.70" y="268.50"/>
<use href="#u" x="390.70" y="268.50"/>
<use href="#u" x="439.70" y="268.50"/>
<use href="#u" x="488.70" y="268.50"/>
<use href="#u" x="537.70" y="268.50"/>
<use href="#u" x="586.70" y="268.50"/>
<use href="#c" x="635.70" y="268.50"/>
<use href="#u" x="684.70" y="268.50"/>
<use href="#u" x="145.70" y="285.50"/>
<use href="#u" x="194.70" y="285.50"/>
<use href="#u" x="243.70" y="285.50"/>
<use href="#u" x="292.70" y="285.50"/>
<use href="#u" x="341.70" y="285.50"/>
<use href="#u" x="390.70" y="285.50"/>
<use href="#c" x="439.70" y="285.50"/>
<use href="#u" x="488.70" y="285.50"/>
<use href="#u" x="537.70" y="285.50"/>
<use href="#u" x="586.70" y="285.50"/>
<use href="#c" x="635.70" y="285.50"/>
<use href="#u" x="684.70" y="285.50"/>
<use href="#u" x="145.70" y="302.50"/>
<use href="#u" x="194.70" y="302.50"/>
<use href="#u" x="243.70" y="302.50"/>
<use href="#u" x="292.70" y="302.50"/>
<use href="#u" x="341.70" y="302.50"/>
<use href="#u" x="390.70" y="302.50"/>
<use href="#c" x="439.70" y="302.50"/>
<use href="#u" x="488.70" y="302.50"/>
<use href="#u" x="537.70" y="302.50"/>
<use href="#u" x="586.70" y="302.50"/>
<use href="#c" x="635.70" y="302.50"/>
<use href="#u" x="684.70" y="302.50"/>
<use href="#u" x="145.70" y="319.50"/>
<use href="#u" x="194.70" y="319.50"/>
<use href="#u" x="243.70" y="319.50"/>
<use href="#u" x="292.70" y="319.50"/>
<use href="#u" x="341.70" y="319.50"/>
<use href="#u" x="390.70" y="319.50"/>
<use href="#u" x="439.70" y="319.50"/>
<use href="#u" x="488.70" y="319.50"/>
<use href="#u" x="537.70" y="319.50"/>
<use href="#u" x="586.70" y="319.50"/>
<use href="#u" x="635.70" y="319.50"/>
<use href="#u" x="684.70" y="319.50"/>
<use href="#u" x="145.70" y="336.50"/>
<use href="#u" x="194.70" y="336.50"/>
<use href="#u" x="243.70" y="336.50"/>
<use href="#u" x="292.70" y="336.50"/>
<use href="#u" x="341.70" y="336.50"/>
<use href="#u" x="390.70" y="336.50"/>
<use href="#u" x="439.70" y="336.50"/>
<use href="#u" x="488.70" y="336.50"/>
<use href="#u" x="537.70" y="336.50"/>
<use href="#u" x="586.70" y="336.50"/>
<use href="#u" x="635.70" y="336.50"/>
<use href="#u" x="684.70" y="336.50"/>
<use href="#u" x="145.70" y="353.50"/>
<use href="#u" x="194.70" y="353.50"/>
<use href="#u" x="243.70" y="353.50"/>
<use href="#u" x="292.70" y="353.50"/>
<use href="#u" x="341.70" y="353.50"/>
<use href="#u" x="390.70" y="353.50"/>
<use href="#u" x="439.70" y="353.50"/>
<use href="#u" x="488.70" y="353.50"/>
<use href="#u" x="537.70" y="353.50"/>
<use href="#u" x="586.70" y="353.50"/>
<use href="#u" x="635.70" y="353.50"/>
<use href="#u" x="684.70" y="353.50"/>
<use href="#u" x="145.70" y="370.50"/>
<use href="#u" x="194.70" y="370.50"/>
<use href="#u" x="243.70" y="370.50"/>
<use href="#u" x="292.70" y="370.50"/>
<use href="#u" x="341.70" y="370.50"/>
<use href="#u" x="390.70" y="370.50"/>
<use href="#u" x="439.70" y="370.50"/>
<use href="#u" x="488.70" y="370.50"/>
<use href="#u" x="537.70" y="370.50"/>
<use href="#u" x="586.70" y="370.50"/>
<use href="#u" x="635.70" y="370.50"/>
<use href="#u" x="684.70" y="370.50"/>
<use href="#u" x="145.70" y="387.50"/>
<use href="#u" x="194.70" y="387.50"/>
<use href="#u" x="243.70" y="387.50"/>
<use href="#u" x="292.70" y="387.50"/>
<use href="#u" x="341.70" y="387.50"/>
<use href="#u" x="390.70" y="387.50"/>
<use href="#u" x="439.70" y="387.50"/>
<use href="#u" x="488.70" y="387.50"/>
<use href="#u" x="537.70" y="387.50"/>
<use href="#u" x="586.70" y="387.50"/>
<use href="#u" x="635.70" y="387.50"/>
<use href="#u" x="684.70" y="387.50"/>
<use href="#u" x="145.70" y="404.50"/>
<use href="#u" x="194.70" y="404.50"/>
<use href="#u" x="243.70" y="404.50"/>
<use href="#u" x="292.70" y="404.50"/>
<use href="#u" x="341.70" y="404.50"/>
<use href="#u" x="390.70" y="404.50"/>
<use href="#u" x="439.70" y="404.50"/>
<use href="#u" x="488.70" y="404.50"/>
<use href="#u" x="537.70" y="404.50"/>
<use href="#u" x="586.70" y="404.50"/>
<use href="#u" x="635.70" y="404.50"/>
<use href="#u" x="684.70" y="404.50"/>
<use href="#u" x="145.70" y="421.50"/>
<use href="#u" x="194.70" y="421.50"/>
<use href="#u" x="243.70" y="421.50"/>
<use href="#u" x="292.70" y="421.50"/>
<use href="#u" x="341.70" y="421.50"/>
<use href="#u" x="390.70" y="421.50"/>
<use href="#u" x="439.70" y="421.50"/>
<use href="#u" x="488.70" y="421.50"/>
<use href="#u" x="537.70" y="421.50"/>
<use href="#u" x="586.70" y="421.50"/>
<use href="#u" x="635.70" y="421.50"/>
<use href="#u" x="684.70" y="421.50"/>
<use href="#u" x="145.70" y="438.50"/>
<use href="#u" x="194.70" y="438.50"/>
<use href="#u" x="243.70" y="438.50"/>
<use href="#u" x="292.70" y="438.50"/>
<use href="#u" x="341.70" y="438.50"/>
<use href="#u" x="390.70" y="438.50"/>
<use href="#u" x="439.70" y="438.50"/>
<use href="#u" x="488.70" y="438.50"/>
<use href="#u" x="537.70" y="438.50"/>
<use href="#u" x="586.70" y="438.50"/>
<use href="#u" x="635.70" y="438.50"/>
<use href="#u" x="684.70" y="438.50"/>
<use href="#u" x="145.70" y="455.50"/>
<use href="#u" x="194.70" y="455.50"/>
<use href="#u" x="243.70" y="455.50"/>
<use href="#u" x="292.70" y="455.50"/>
<use href="#u" x="341.70" y="455.50"/>
<use href="#u" x="390.70" y="455.50"/>
<use href="#u" x="439.70" y="455.50"/>
<use href="#u" x="488.70" y="455.50"/>
<use href="#u" x="537.70" y="455.50"/>
<use href="#u" x="586.70" y="455.50"/>
<use href="#u" x="635.70" y="455.50"/>
<use href="#u" x="684.70" y="455.50"/>
<use href="#u" x="145.70" y="472.50"/>
<use href="#u" x="194.70" y="472.50"/>
<use href="#u" x="243.70" y="472.50"/>
<use href="#u" x="292.70" y="472.50"/>
<use href="#u" x="341.70" y="472.50"/>
<use href="#u" x="390.70" y="472.50"/>
<use href="#u" x="439.70" y="472.50"/>
<use href="#u" x="488.70" y="472.50"/>
<use href="#u" x="537.70" y="472.50"/>
<use href="#u" x="586.70" y="472.50"/>
<use href="#u" x="635.70" y="472.50"/>
<use href="#u" x="684.70" y="472.50"/>
<use href="#u" x="145.70" y="489.50"/>
<use href="#u" x="194.70" y="489.50"/>
<use href="#u" x="243.70" y="489.50"/>
<use href="#u" x="292.70" y="489.50"/>
<use href="#u" x="341.70" y="489.50"/>
<use href="#u" x="390.70" y="489.50"/>
<use href="#u" x="439.70" y="489.50"/>
<use href="#u" x="488.70" y="489.50"/>
<use href="#u" x="537.70" y="489.50"/>
<use href="#u" x="586.70" y="489.50"/>
<use href="#u" x="635.70" y="489.50"/>
<use href="#u" x="684.70" y="489.50"/>
<use href="#u" x="145.70" y="506.50"/>
<use href="#u" x="194.70" y="506.50"/>
<use href="#u" x="243.70" y="506.50"/>
<use href="#u" x="292.70" y="506.50"/>
<use href="#u" x="341.70" y="506.50"/>
<use href="#u" x="390.70" y="506.50"/>
<use href="#u" x="439.70" y="506.50"/>
<use href="#u" x="488.70" y="506.50"/>
<use href="#u" x="537.70" y="506.50"/>
<use href="#u" x="586.70" y="506.50"/>
<use href="#u" x="635.70" y="506.50"/>
<use href="#u" x="684.70" y="506.50"/>
<use href="#u" x="145.70" y="523.50"/>
<use href="#u" x="194.70" y="523.50"/>
<use href="#u" x="243.70" y="523.50"/>
<use href="#u" x="292.70" y="523.50"/>
<use href="#u" x="341.70" y="523.50"/>
<use href="#u" x="390.70" y="523.50"/>
<use href="#u" x="439.70" y="523.50"/>
<use href="#u" x="488.70" y="523.50"/>
<use href="#u" x="537.70" y="523.50"/>
<use href="#u" x="586.70" y="523.50"/>
<use href="#u" x="635.70" y="523.50"/>
<use href="#u" x="684.70" y="523.50"/>
<use href="#u" x="145.70" y="540.50"/>
<use href="#u" x="194.70" y="540.50"/>
<use href="#u" x="243.70" y="540.50"/>
<use href="#u" x="292.70" y="540.50"/>
<use href="#u" x="341.70" y="540.50"/>
<use href="#u" x="390.70" y="540.50"/>
<use href="#u" x="439.70" y="540.50"/>
<use href="#u" x="488.70" y="540.50"/>
<use href="#u" x="537.70" y="540.50"/>
<use href="#u" x="586.70" y="540.50"/>
<use href="#u" x="635.70" y="540.50"/>
<use href="#u" x="684.70" y="540.50"/>
<use href="#u" x="145.70" y="557.50"/>
<use href="#u" x="194.70" y="557.50"/>
<use href="#u" x="243.70" y="557.50"/>
<use href="#u" x="292.70" y="557.50"/>
<use href="#u" x="341.70" y="557.50"/>
<use href="#u" x="390.70" y="557.50"/>
<use href="#u" x="439.70" y="557.50"/>
<use href="#u" x="488.70" y="557.50"/>
<use href="#u" x="537.70" y="557.50"/>
<use href="#u" x="586.70" y="557.50"/>
<use href="#u" x="635.70" y="557.50"/>
<use href="#u" x="684.70" y="557.50"/>
<use href="#u" x="145.70" y="574.50"/>
<use href="#u" x="194.70" y="574.50"/>
<use href="#u" x="243.70" y="574.50"/>
<use href="#u" x="292.70" y="574.50"/>
<use href="#u" x="341.70" y="574.50"/>
<use href="#u" x="390.70" y="574.50"/>
<use href="#u" x="439.70" y="574.50"/>
<use href="#u" x="488.70" y="574.50"/>
<use href="#u" x="537.70" y="574.50"/>
<use href="#u" x="586.70" y="574.50"/>
<use href="#u" x="635.70" y="574.50"/>
<use href="#u" x="684.70" y="574.50"/>
<use href="#u" x="145.70" y="591.50"/>
<use href="#u" x="194.70" y="591.50"/>
<use href="#u" x="243.70" y="591.50"/>
<use href="#u" x="292.70" y="591.50"/>
<use href="#u" x="341.70" y="591.50"/>
<use href="#u" x="390.70" y="591.50"/>
<use href="#u" x="439.70" y="591.50"/>
<use href="#u" x="488.70" y="591.50"/>
<use href="#u" x="537.70" y="591.50"/>
<use href="#u" x="586.70" y="591.50"/>
<use href="#u" x="635.70" y="591.50"/>
<use href="#u" x="684.70" y="591.50"/>
<use href="#u" x="145.70" y="608.50"/>
<use href="#u" x="194.70" y="608.50"/>
<use href="#u" x="243.70" y="608.50"/>
<use href="#u" x="292.70" y="608.50"/>
<use href="#u" x="341.70" y="608.50"/>
<use href="#u" x="390.70" y="608.50"/>
<use href="#u" x="439.70" y="608.50"/>
<use href="#u" x="488.70" y="608.50"/>
<use href="#u" x="537.70" y="608.50"/>
<use href="#u" x="586.70" y="608.50"/>
<use href="#u" x="635.70" y="608.50"/>
<use href="#u" x="684.70" y="608.50"/>
<use href="#u" x="145.70" y="625.50"/>
<use href="#u" x="194.70" y="625.50"/>
<use href="#u" x="243.70" y="625.50"/>
<use href="#u" x="292.70" y="625.50"/>
<use href="#u" x="341.70" y="625.50"/>
<use href="#u" x="390.70" y="625.50"/>
<use href="#u" x="439.70" y="625.50"/>
<use href="#u" x="488.70" y="625.50"/>
<use href="#u" x="537.70" y="625.50"/>
<use href="#u" x="586.70" y="625.50"/>
<use href="#u" x="635.70" y="625.50"/>
<use href="#u" x="684.70" y="625.50"/>
<use href="#u" x="145.70" y="642.50"/>
<use href="#u" x="194.70" y="642.50"/>
<use href="#u" x="243.70" y="642.50"/>
<use href="#u" x="292.70" y="642.50"/>
<use href="#u" x="341.70" y="642.50"/>
<use href="#u" x="390.70" y="642.50"/>
<use href="#u" x="439.70" y="642.50"/>
<use href="#u" x="488.70" y="642.50"/>
<use href="#u" x="537.70" y="642.50"/>
<use href="#u" x="586.70" y="642.50"/>
<use href="#u" x="635.70" y="642.50"/>
<use href="#u" x="684.70" y="642.50"/>
<use href="#u" x="145.70" y="659.50"/>
<use href="#u" x="194.70" y="659.50"/>
<use href="#u" x="243.70" y="659.50"/>
<use href="#u" x="292.70" y="659.50"/>
<use href="#u" x="341.70" y="659.50"/>
<use href="#u" x="390.70" y="659.50"/>
<use href="#u" x="439.70" y="659.50"/>
<use href="#u" x="488.70" y="659.50"/>
<use href="#u" x="537.70" y="659.50"/>
<use href="#u" x="586.70" y="659.50"/>
<use href="#u" x="635.70" y="659.50"/>
<use href="#u" x="684.70" y="659.50"/>
<use href="#u" x="145.70" y="676.50"/>
<use href="#u" x="194.70" y="676.50"/>
<use href="#u" x="243.70" y="676.50"/>
<use href="#u" x="292.70" y="676.50"/>
<use href="#u" x="341.70" y="676.50"/>
<use href="#u" x="390.70" y="676.50"/>
<use href="#u" x="439.70" y="676.50"/>
<use href="#u" x="488.70" y="676.50"/>
<use href="#u" x="537.70" y="676.50"/>
<use href="#u" x="586.70" y="676.50"/>
<use href="#u" x="635.70" y="676.50"/>
<use href="#u" x="684.70" y="676.50"/>
<use href="#u" x="145.70" y="693.50"/>
<use href="#u" x="194.70" y="693.50"/>
<use href="#u" x="243.70" y="693.50"/>
<use href="#u" x="292.70" y="693.50"/>
<use href="#u" x="341.70" y="693.50"/>
<use href="#u" x="390.70" y="693.50"/>
<use href="#u" x="439.70" y="693.50"/>
<use href="#u" x="488.70" y="693.50"/>
<use href="#u" x="537.70" y="693.50"/>
<use href="#u" x="586.70" y="693.50"/>
<use href="#u" x="635.70" y="693.50"/>
<use href="#u" x="684.70" y="693.50"/>
<use href="#u" x="145.70" y="710.50"/>
<use href="#u" x="194.70" y="710.50"/>
<use href="#u" x="243.70" y="710.50"/>
<use href="#u" x="292.70" y="710.50"/>
<use href="#u" x="341.70" y="710.50"/>
<use href="#u" x="390.70" y="710.50"/>
<use href="#u" x="439.70" y="710.50"/>
<use href="#u" x="488.70" y="710.50"/>
<use href="#u" x="537.70" y="710.50"/>
<use href="#u" x="586.70" y="710.50"/>
<use href="#u" x="635.70" y="710.50"/>
<use href="#u" x="684.70" y="710.50"/>
<use href="#u" x="145.70" y="727.50"/>
<use href="#u" x="194.70" y="727.50"/>
<use href="#u" x="243.70" y="727.50"/>
<use href="#u" x="292.70" y="727.50"/>
<use href="#u" x="341.70" y="727.50"/>
<use href="#u" x="390.70" y="727.50"/>
<use href="#u" x="439.70" y="727.50"/>
<use href="#u" x="488.70" y="727.50"/>
<use href="#u" x="537.70" y="727.50"/>
<use href="#u" x="586.70" y="727.50"/>
<use href="#u" x="635.70" y="727.50"/>
<use href="#u" x="684.70" y="727.50"/>
<use href="#u" x="145.70" y="744.50"/>
<use href="#u" x="194.70" y="744.50"/>
<use href="#u" x="243.70" y="744.50"/>
<use href="#u" x="292.70" y="744.50"/>
<use href="#u" x="341.70" y="744.50"/>
<use href="#u" x="390.70" y="744.50"/>
<use href="#u" x="439.70" y="744.50"/>
<use href="#u" x="488.70" y="744.50"/>
<use href="#u" x="537.70" y="744.50"/>
<use href="#u" x="586.70" y="744.50"/>
<use href="#u" x="635.70" y="744.50"/>
<use href="#u" x="684.70" y="744.50"/>
<use href="#u" x="145.70" y="761.50"/>
<use href="#u" x="194.70" y="761.50"/>
<use href="#u" x="243.70" y="761.50"/>
<use href="#u" x="292.70" y="761.50"/>
<use href="#u" x="341.70" y="761.50"/>
<use href="#u" x="390.70" y="761.50"/>
<use href="#u" x="439.70" y="761.50"/>
<use href="#u" x="488.70" y="761.50"/>
<use href="#u" x="537.70" y="761.50"/>
<use href="#u" x="586.70" y="761.50"/>
<use href="#u" x="635.70" y="761.50"/>
<use href="#u" x="684.70" y="761.50"/>
<use href="#u" x="145.70" y="778.50"/>
<use href="#u" x="194.70" y="778.50"/>
<use href="#u" x="243.70" y="778.50"/>
<use href="#u" x="292.70" y="778.50"/>
<use href="#u" x="341.70" y="778.50"/>
<use href="#u" x="390.70" y="778.50"/>
<use href="#u" x="439.70" y="778.50"/>
<use href="#u" x="488.70" y="778.50"/>
<use href="#u" x="537.70" y="778.50"/>
<use href="#u" x="586.70" y="778.50"/>
<use href="#u" x="635.70" y="778.50"/>
<use href="#u" x="684.70" y="778.50"/>
<use href="#u" x="145.70" y="795.50"/>
<use href="#u" x="194.70" y="795.50"/>
<use href="#u" x="243.70" y="795.50"/>
<use href="#u" x="292.70" y="795.50"/>
<use href="#u" x="341.70" y="795.50"/>
<use href="#u" x="390.70" y="795.50"/>
<use href="#u" x="439.70" y="795.50"/>
<use href="#u" x="488.70" y="795.50"/>
<use href="#u" x="537.70" y="795.50"/>
<use href="#u" x="586.70" y="795.50"/>
<use href="#u" x="635.70" y="795.50"/>
<use href="#u" x="684.70" y="795.50"/>
<use href="#u" x="145.70" y="812.50"/>
<use href="#u" x="194.70" y="812.50"/>
<use href="#u" x="243.70" y="812.50"/>
<use href="#u" x="292.70" y="812.50"/>
<use href="#u" x="341.70" y="812.50"/>
<use href="#u" x="390.70" y="812.50"/>
<use href="#u" x="439.70" y="812.50"/>
<use href="#u" x="488.70" y="812.50"/>
<use href="#u" x="537.70" y="812.50"/>
<use href="#u" x="586.70" y="812.50"/>
<use href="#u" x="635.70" y="812.50"/>
<use href="#u" x="684.70" y="812.50"/>
</svg>
<svg style="left:801px;top:230px" width="430" height="307" viewBox="801 230 430 307" font-family="Liberation Sans, sans-serif" text-rendering="geometricPrecision">
<rect x="803.5" y="232.5" width="425" height="302" fill="#fff" stroke="#969696" stroke-width="1"/>
<text x="819.3" y="260.6" font-size="16" fill="#757575">2-lepton mass histogram</text>
<rect x="864" y="278.50" width="349.30" height="1" fill="#dddddd"/>
<rect x="864" y="325.25" width="349.30" height="1" fill="#dddddd"/>
<rect x="864" y="372.00" width="349.30" height="1" fill="#dddddd"/>
<rect x="864" y="418.75" width="349.30" height="1" fill="#dddddd"/>
<path d="M865.70 466.30V373.30Q865.70 372.50 866.50 372.50H880.10Q880.90 372.50 880.90 373.30V466.30z" fill="#4285f4"/>
<path d="M882.60 466.30V279.80Q882.60 279.00 883.40 279.00H897.00Q897.80 279.00 897.80 279.80V466.30z" fill="#4285f4"/>
<path d="M900.05 466.30V373.30Q900.05 372.50 900.85 372.50H914.45Q915.25 372.50 915.25 373.30V466.30z" fill="#4285f4"/>
<path d="M935.70 466.30V373.30Q935.70 372.50 936.50 372.50H950.10Q950.90 372.50 950.90 373.30V466.30z" fill="#4285f4"/>
<path d="M1162.40 466.30V373.30Q1162.40 372.50 1163.20 372.50H1176.80Q1177.60 372.50 1177.60 373.30V466.30z" fill="#4285f4"/>
<path d="M1196.90 466.30V373.30Q1196.90 372.50 1197.70 372.50H1211.30Q1212.10 372.50 1212.10 373.30V466.30z" fill="#4285f4"/>
<rect x="864" y="466.05" width="349.30" height="1" fill="#6e6e6e"/>
<text x="859.2" y="282.30" font-size="9.7" text-anchor="end" fill="#222">2.0</text>
<text x="859.2" y="329.05" font-size="9.7" text-anchor="end" fill="#222">1.5</text>
<text x="859.2" y="375.80" font-size="9.7" text-anchor="end" fill="#222">1.0</text>
<text x="859.2" y="422.55" font-size="9.7" text-anchor="end" fill="#222">0.5</text>
<text x="859.2" y="469.30" font-size="9.7" text-anchor="end" fill="#222">0.0</text>
<text x="869.60" y="476.60" font-size="10" text-anchor="end" fill="#4a4a4a" transform="rotate(-45 869.60 476.60)">0.00</text>
<text x="887.07" y="476.60" font-size="10" text-anchor="end" fill="#4a4a4a" transform="rotate(-45 887.07 476.60)">5.00</text>
<text x="904.53" y="476.60" font-size="10" text-anchor="end" fill="#4a4a4a" transform="rotate(-45 904.53 476.60)">10.00</text>
<text x="922.00" y="476.60" font-size="10" text-anchor="end" fill="#4a4a4a" transform="rotate(-45 922.00 476.60)">15.00</text>
<text x="939.46" y="476.60" font-size="10" text-anchor="end" fill="#4a4a4a" transform="rotate(-45 939.46 476.60)">20.00</text>
<text x="956.93" y="476.60" font-size="10" text-anchor="end" fill="#4a4a4a" transform="rotate(-45 956.93 476.60)">25.00</text>
<text x="974.39" y="476.60" font-size="10" text-anchor="end" fill="#4a4a4a" transform="rotate(-45 974.39 476.60)">30.00</text>
<text x="991.86" y="476.60" font-size="10" text-anchor="end" fill="#4a4a4a" transform="rotate(-45 991.86 476.60)">35.00</text>
<text x="1009.32" y="476.60" font-size="10" text-anchor="end" fill="#4a4a4a" transform="rotate(-45 1009.32 476.60)">40.00</text>
<text x="1026.78" y="476.60" font-size="10" text-anchor="end" fill="#4a4a4a" transform="rotate(-45 1026.78 476.60)">45.00</text>
<text x="1044.25" y="476.60" font-size="10" text-anchor="end" fill="#4a4a4a" transform="rotate(-45 1044.25 476.60)">50.00</text>
<text x="1061.71" y="476.60" font-size="10" text-anchor="end" fill="#4a4a4a" transform="rotate(-45 1061.71 476.60)">55.00</text>
<text x="1079.18" y="476.60" font-size="10" text-anchor="end" fill="#4a4a4a" transform="rotate(-45 1079.18 476.60)">60.00</text>
<text x="1096.64" y="476.60" font-size="10" text-anchor="end" fill="#4a4a4a" transform="rotate(-45 1096.64 476.60)">65.00</text>
<text x="1114.11" y="476.60" font-size="10" text-anchor="end" fill="#4a4a4a" transform="rotate(-45 1114.11 476.60)">70.00</text>
<text x="1131.57" y="476.60" font-size="10" text-anchor="end" fill="#4a4a4a" transform="rotate(-45 1131.57 476.60)">75.00</text>
<text x="1149.04" y="476.60" font-size="10" text-anchor="end" fill="#4a4a4a" transform="rotate(-45 1149.04 476.60)">80.00</text>
<text x="1166.50" y="476.60" font-size="10" text-anchor="end" fill="#4a4a4a" transform="rotate(-45 1166.50 476.60)">85.00</text>
<text x="1183.97" y="476.60" font-size="10" text-anchor="end" fill="#4a4a4a" transform="rotate(-45 1183.97 476.60)">90.00</text>
<text x="1201.43" y="476.60" font-size="10" text-anchor="end" fill="#4a4a4a" transform="rotate(-45 1201.43 476.60)">95.00</text>
<text x="1218.90" y="476.60" font-size="10" text-anchor="end" fill="#4a4a4a" transform="rotate(-45 1218.90 476.60)">100.00</text>
<text x="827.4" y="385.3" font-size="9.7" text-anchor="middle" fill="#222" transform="rotate(-90 827.4 385.3)">E<tspan dx=".9">vents/bin</tspan></text>
<text x="993" y="517.1" font-size="9.65" fill="#222">Invariant mass (GeV)</text>
</svg>
<svg style="left:797px;top:555px" width="429" height="307" viewBox="797 555 429 307" font-family="Liberation Sans, sans-serif" text-rendering="geometricPrecision">
<rect x="799.5" y="557.5" width="424" height="302" fill="#fff" stroke="#969696" stroke-width="1"/>
<text x="813.1" y="583.8" font-size="16" fill="#757575">4-lepton mass histogram</text>
<rect x="858.3" y="600.50" width="351.50" height="1" fill="#dddddd"/>
<rect x="858.3" y="638.90" width="351.50" height="1" fill="#dddddd"/>
<rect x="858.3" y="677.30" width="351.50" height="1" fill="#dddddd"/>
<rect x="858.3" y="715.70" width="351.50" height="1" fill="#dddddd"/>
<path d="M874.60 754.90V640.20Q874.60 639.40 875.40 639.40H888.10Q888.90 639.40 888.90 640.20V754.90z" fill="#4285f4"/>
<path d="M906.50 754.90V678.60Q906.50 677.80 907.30 677.80H920.00Q920.80 677.80 920.80 678.60V754.90z" fill="#4285f4"/>
<path d="M938.60 754.90V717.00Q938.60 716.20 939.40 716.20H952.10Q952.90 716.20 952.90 717.00V754.90z" fill="#4285f4"/>
<path d="M954.55 754.90V601.80Q954.55 601.00 955.35 601.00H968.05Q968.85 601.00 968.85 601.80V754.90z" fill="#4285f4"/>
<path d="M1147.20 754.90V717.00Q1147.20 716.20 1148.00 716.20H1160.70Q1161.50 716.20 1161.50 717.00V754.90z" fill="#4285f4"/>
<rect x="858.3" y="754.20" width="351.50" height="1.4" fill="#9a9a9a"/>
<text x="853.6" y="604.30" font-size="9.7" text-anchor="end" fill="#222">4</text>
<text x="853.6" y="642.70" font-size="9.7" text-anchor="end" fill="#222">3</text>
<text x="853.6" y="681.10" font-size="9.7" text-anchor="end" fill="#222">2</text>
<text x="853.6" y="719.50" font-size="9.7" text-anchor="end" fill="#222">1</text>
<text x="853.6" y="757.90" font-size="9.7" text-anchor="end" fill="#222">0</text>
<text x="863.90" y="765.20" font-size="10" text-anchor="end" fill="#4a4a4a" transform="rotate(-45 863.90 765.20)">50.00</text>
<text x="879.88" y="765.20" font-size="10" text-anchor="end" fill="#4a4a4a" transform="rotate(-45 879.88 765.20)">75.00</text>
<text x="895.85" y="765.20" font-size="10" text-anchor="end" fill="#4a4a4a" transform="rotate(-45 895.85 765.20)">100.00</text>
<text x="911.83" y="765.20" font-size="10" text-anchor="end" fill="#4a4a4a" transform="rotate(-45 911.83 765.20)">125.00</text>
<text x="927.81" y="765.20" font-size="10" text-anchor="end" fill="#4a4a4a" transform="rotate(-45 927.81 765.20)">150.00</text>
<text x="943.79" y="765.20" font-size="10" text-anchor="end" fill="#4a4a4a" transform="rotate(-45 943.79 765.20)">175.00</text>
<text x="959.76" y="765.20" font-size="10" text-anchor="end" fill="#4a4a4a" transform="rotate(-45 959.76 765.20)">200.00</text>
<text x="975.74" y="765.20" font-size="10" text-anchor="end" fill="#4a4a4a" transform="rotate(-45 975.74 765.20)">225.00</text>
<text x="991.72" y="765.20" font-size="10" text-anchor="end" fill="#4a4a4a" transform="rotate(-45 991.72 765.20)">250.00</text>
<text x="1007.70" y="765.20" font-size="10" text-anchor="end" fill="#4a4a4a" transform="rotate(-45 1007.70 765.20)">275.00</text>
<text x="1023.67" y="765.20" font-size="10" text-anchor="end" fill="#4a4a4a" transform="rotate(-45 1023.67 765.20)">300.00</text>
<text x="1039.65" y="765.20" font-size="10" text-anchor="end" fill="#4a4a4a" transform="rotate(-45 1039.65 765.20)">325.00</text>
<text x="1055.63" y="765.20" font-size="10" text-anchor="end" fill="#4a4a4a" transform="rotate(-45 1055.63 765.20)">350.00</text>
<text x="1071.60" y="765.20" font-size="10" text-anchor="end" fill="#4a4a4a" transform="rotate(-45 1071.60 765.20)">375.00</text>
<text x="1087.58" y="765.20" font-size="10" text-anchor="end" fill="#4a4a4a" transform="rotate(-45 1087.58 765.20)">400.00</text>
<text x="1103.56" y="765.20" font-size="10" text-anchor="end" fill="#4a4a4a" transform="rotate(-45 1103.56 765.20)">425.00</text>
<text x="1119.54" y="765.20" font-size="10" text-anchor="end" fill="#4a4a4a" transform="rotate(-45 1119.54 765.20)">450.00</text>
<text x="1135.51" y="765.20" font-size="10" text-anchor="end" fill="#4a4a4a" transform="rotate(-45 1135.51 765.20)">475.00</text>
<text x="1151.49" y="765.20" font-size="10" text-anchor="end" fill="#4a4a4a" transform="rotate(-45 1151.49 765.20)">500.00</text>
<text x="1167.47" y="765.20" font-size="10" text-anchor="end" fill="#4a4a4a" transform="rotate(-45 1167.47 765.20)">525.00</text>
<text x="1183.45" y="765.20" font-size="10" text-anchor="end" fill="#4a4a4a" transform="rotate(-45 1183.45 765.20)">550.00</text>
<text x="1199.42" y="765.20" font-size="10" text-anchor="end" fill="#4a4a4a" transform="rotate(-45 1199.42 765.20)">575.00</text>
<text x="1215.40" y="765.20" font-size="10" text-anchor="end" fill="#4a4a4a" transform="rotate(-45 1215.40 765.20)">600.00</text>
<text x="820.4" y="690" font-size="9.7" text-anchor="middle" fill="#222" transform="rotate(-90 820.4 690)">E<tspan dx=".9">vents/bin</tspan></text>
<text x="987.3" y="806.2" font-size="9.65" fill="#222">Imvariant mass (GeV)</text>
</svg>

<div style="left:1376px;top:2px;width:1px;height:106px;background:#fff"></div>
<div style="left:0;top:0;width:1380px;height:2px;background:#3f46cb"></div>
<div style="left:0;top:1px;width:1380px;height:1px;background:#363cc8"></div>
<div style="left:0;top:0;width:3px;height:815px;background:#3f46cb"></div>
<div style="left:2px;top:1px;width:1px;height:812px;background:#363cc8"></div>
<div style="left:1377px;top:0;width:3px;height:815px;background:#3f46cb"></div>
<div style="left:1377px;top:1px;width:1px;height:812px;background:#363cc8"></div>
<div style="left:1376px;top:2px;width:1px;height:809px;background:rgba(54,60,200,.28)"></div>
<div style="left:0;top:811px;width:1380px;height:3px;background:#3f46cb"></div>
<div style="left:2px;top:811px;width:1376px;height:1px;background:#363cc8"></div>
</div></body></html>
